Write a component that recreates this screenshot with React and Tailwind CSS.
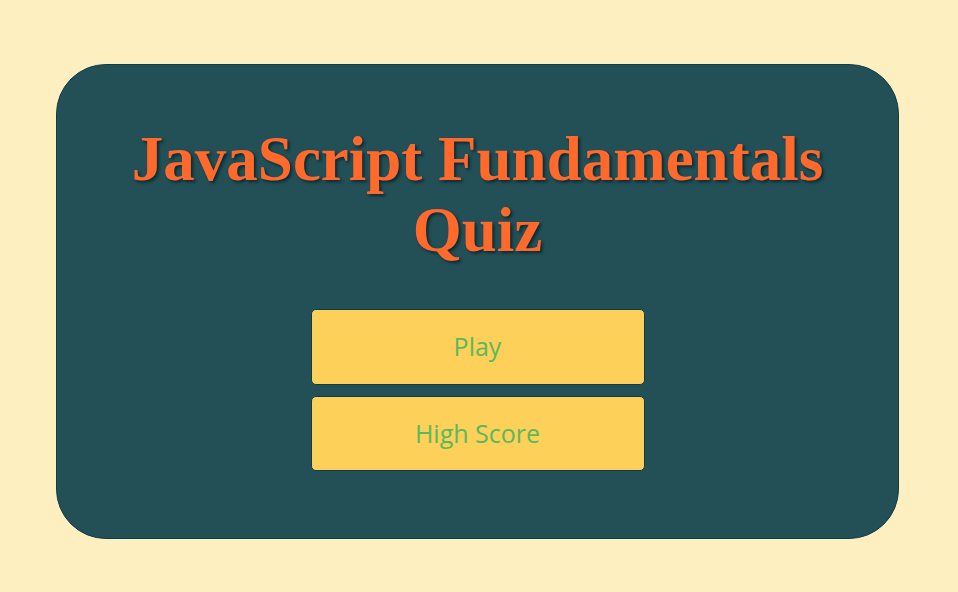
export default function App() {
  return (
    <div className="bg-[#fdefbf] w-full h-[592px] flex pl-[56px] pt-[64px]">
      {/* ===== Card ===== */}
      <div className="w-[843px] h-[475px] bg-[#234f57] border border-[#0e3d4a] rounded-[50px] flex flex-col items-center">
        <h1 className="mt-[59px] text-[63px] leading-[71px] font-bold text-center text-[#ff6a2c] font-['Liberation_Serif',serif] [text-shadow:2px_2px_3px_#0b2a30]">
          JavaScript Fundamentals
          <br />
          Quiz
        </h1>

        <div className="mt-[43px] flex flex-col gap-[11px]">
          <button className="w-[334px] h-[76px] bg-[#fdd05a] border border-[#0e3d4a] rounded-[5px] text-[25px] text-[#5cb85c] font-['Open_Sans',sans-serif]">
            Play
          </button>
          <button className="w-[334px] h-[75px] bg-[#fdd05a] border border-[#0e3d4a] rounded-[5px] text-[25px] text-[#5cb85c] font-['Open_Sans',sans-serif]">
            High Score
          </button>
        </div>
      </div>
    </div>
  );
}
